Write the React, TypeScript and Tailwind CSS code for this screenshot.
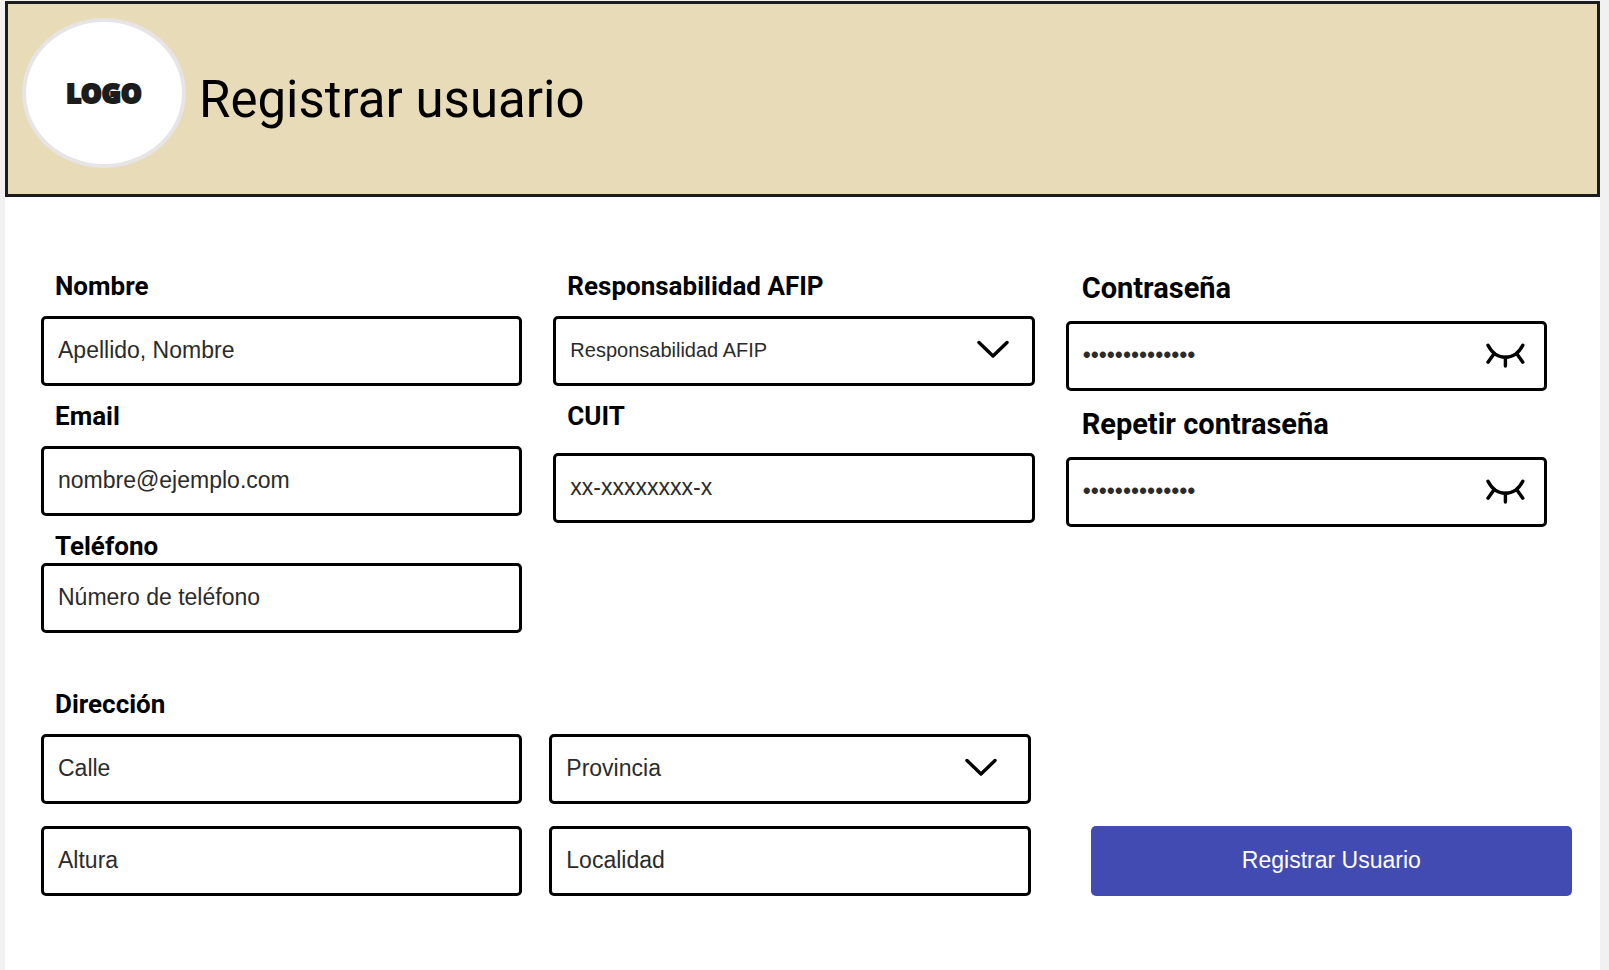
import { useState } from "react";
import type { InputHTMLAttributes, ReactNode } from "react";

const boxClass =
  "h-[70px] w-full rounded-[5px] border-[3px] border-black bg-white px-[14px] pb-[2px] text-[#2b2b2b] outline-none focus:border-[#424bb2]";

function Label({ htmlFor, large, children }: { htmlFor: string; large?: boolean; children: ReactNode }) {
  return (
    <label
      htmlFor={htmlFor}
      className={`block font-bold leading-[30px] text-black ${large ? "pl-4 text-[29px]" : "pl-[14px] text-[26px]"}`}
    >
      {children}
    </label>
  );
}

function TextBox(props: InputHTMLAttributes<HTMLInputElement>) {
  return (
    <input
      {...props}
      className={`${boxClass} font-['Liberation_Sans',sans-serif] text-[23px] placeholder:text-[#2b2b2b] placeholder:opacity-100`}
    />
  );
}

function SelectBox({
  id,
  label,
  options,
  small,
}: {
  id: string;
  label: string;
  options: string[];
  small?: boolean;
}) {
  return (
    <div className="relative">
      <select
        id={id}
        aria-label={label}
        defaultValue=""
        className={`${boxClass} appearance-none font-['Liberation_Sans',sans-serif] ${small ? "text-[20px]" : "text-[23px]"}`}
      >
        <option value="">{label}</option>
        {options.map((option) => (
          <option key={option}>{option}</option>
        ))}
      </select>
      <svg
        viewBox="0 0 32 20"
        fill="none"
        stroke="#000"
        strokeWidth="3.4"
        strokeLinecap="round"
        strokeLinejoin="round"
        aria-hidden="true"
        className={`pointer-events-none absolute top-6 h-5 w-8 ${small ? "right-[26px]" : "right-[34px]"}`}
      >
        <path d="M2 2.5 16 16 30 2.5" />
      </svg>
    </div>
  );
}

function PasswordBox({ id }: { id: string }) {
  const [visible, setVisible] = useState(false);
  return (
    <div className="relative">
      <TextBox
        id={id}
        type={visible ? "text" : "password"}
        defaultValue="contrasena1234"
        autoComplete="new-password"
      />
      <button
        type="button"
        aria-label="Mostrar contraseña"
        aria-pressed={visible}
        onClick={() => setVisible(!visible)}
        className="absolute right-[22px] top-[22px]"
      >
        <svg
          viewBox="0 0 39 26"
          fill="none"
          stroke="#000"
          strokeWidth="3.4"
          strokeLinecap="round"
          strokeLinejoin="round"
          aria-hidden="true"
          className="h-[26px] w-[39px]"
        >
          <path d="M2 2.2C6 10 12 14.2 19.4 14.2S32.8 10 36.8 2.2" />
          <path d="M8 10.8 2 19.2M19.4 14.2V23M30.8 10.8 36.8 19.2" />
        </svg>
      </button>
    </div>
  );
}

export default function App() {
  return (
    <div className="min-h-screen bg-[#f1f1f1] pl-[5px] pr-[9px] pt-px font-[Roboto,sans-serif]">
      <div className="min-h-[calc(100vh-1px)] bg-white">
        <header className="flex h-[196px] items-start border-[3px] border-[#1c1c1c] bg-[#e7dbb8] pl-[14px] pt-[14px]">
          <div className="flex h-[150px] w-[164px] shrink-0 items-center justify-center rounded-[50%] border-4 border-[#e6e4e4] bg-white">
            <span className="font-['Noto_Sans',sans-serif] text-[26px] font-black leading-none text-[#1c1c1c] [-webkit-text-stroke:2px_#1c1c1c]">
              LOGO
            </span>
          </div>
          <h1 className="ml-[13px] mt-[52px] text-[51px] leading-[60px] text-black">Registrar usuario</h1>
        </header>

        <form onSubmit={(event) => event.preventDefault()} className="pb-16 pt-[74px]">
          <div className="grid grid-cols-3 gap-x-[31px] pl-9 pr-[53px]">
            <div className="flex flex-col gap-[15px]">
              <Label htmlFor="nombre">Nombre</Label>
              <TextBox id="nombre" type="text" placeholder="Apellido, Nombre" />
              <Label htmlFor="email">Email</Label>
              <TextBox id="email" type="email" placeholder="nombre@ejemplo.com" />
              <div className="flex flex-col gap-[2px]">
                <Label htmlFor="telefono">Teléfono</Label>
                <TextBox id="telefono" type="tel" placeholder="Número de teléfono" />
              </div>
            </div>

            <div className="flex flex-col gap-[15px]">
              <Label htmlFor="afip">Responsabilidad AFIP</Label>
              <SelectBox
                id="afip"
                label="Responsabilidad AFIP"
                options={["Responsable inscripto", "Monotributista", "Exento"]}
                small
              />
              <div className="flex flex-col gap-[22px]">
                <Label htmlFor="cuit">CUIT</Label>
                <TextBox id="cuit" type="text" placeholder="xx-xxxxxxxx-x" />
              </div>
            </div>

            <div className="flex flex-col gap-[18px] pt-[2px]">
              <Label htmlFor="clave" large>
                Contraseña
              </Label>
              <PasswordBox id="clave" />
              <Label htmlFor="repetir" large>
                Repetir contraseña
              </Label>
              <PasswordBox id="repetir" />
            </div>
          </div>

          <div className="mt-14 flex flex-col gap-[15px] pl-9 pr-7">
            <Label htmlFor="calle">Dirección</Label>
            <div className="flex gap-[27px]">
              <div className="flex flex-1 flex-col gap-[22px]">
                <TextBox id="calle" type="text" placeholder="Calle" />
                <TextBox id="altura" type="text" placeholder="Altura" aria-label="Altura" />
              </div>
              <div className="flex flex-1 flex-col gap-[22px]">
                <SelectBox id="provincia" label="Provincia" options={["Buenos Aires", "Córdoba", "Mendoza", "Santa Fe"]} />
                <TextBox id="localidad" type="text" placeholder="Localidad" aria-label="Localidad" />
              </div>
              <div className="ml-[33px] flex flex-1 items-end">
                <button
                  type="submit"
                  className="h-[70px] w-full rounded-[5px] bg-[#424bb2] pb-[2px] font-['Liberation_Sans',sans-serif] text-[23px] text-white hover:bg-[#373fa0]"
                >
                  Registrar Usuario
                </button>
              </div>
            </div>
          </div>
        </form>
      </div>
    </div>
  );
}
